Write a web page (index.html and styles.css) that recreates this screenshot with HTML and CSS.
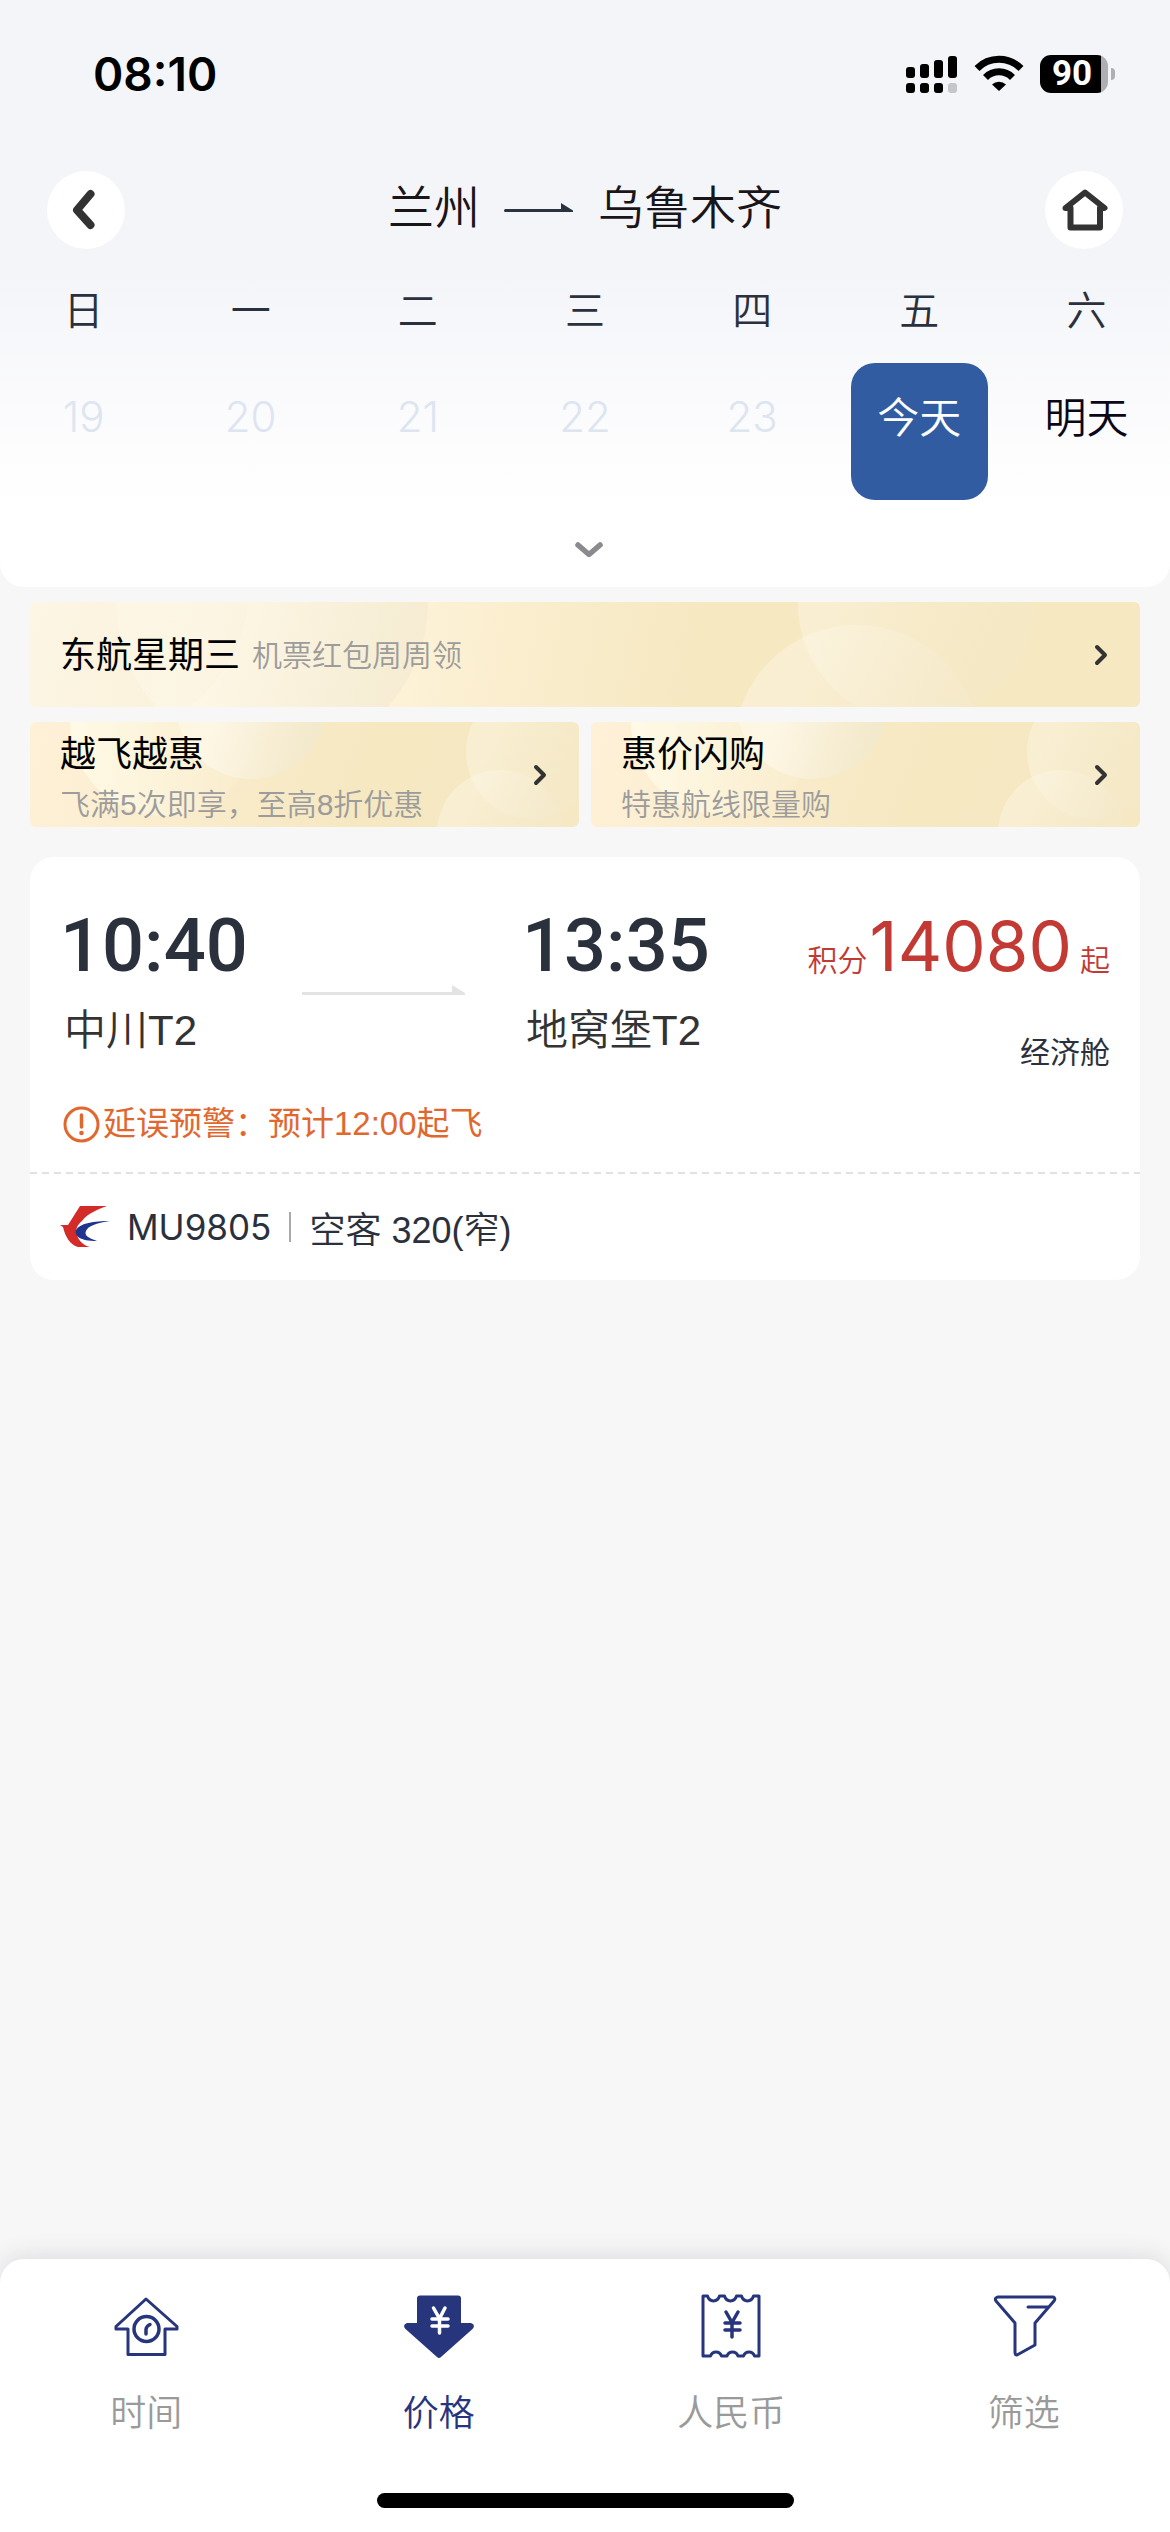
FILE: index.html
```html
<!DOCTYPE html>
<html lang="zh-CN">
<head>
<meta charset="utf-8">
<meta name="viewport" content="width=device-width">
<title>兰州 - 乌鲁木齐</title>
<link rel="stylesheet" href="styles.css">
</head>
<body>
<svg class="defs" aria-hidden="true">
  <defs>
    <linearGradient id="fade" x1="0" y1="0" x2="1" y2="0.5">
      <stop offset="0.3" stop-color="#fffaf0" stop-opacity="0.35"/>
      <stop offset="0.9" stop-color="#f3ecd6" stop-opacity="0.2"/>
    </linearGradient>
    <linearGradient id="glow" x1="0" y1="0" x2="1" y2="0.3">
      <stop offset="0" stop-color="#fffceb" stop-opacity="0.3"/>
      <stop offset="0.4" stop-color="#fffaec" stop-opacity="0.7"/>
      <stop offset="1" stop-color="#f1ead2" stop-opacity="0.6"/>
    </linearGradient>
    <linearGradient id="pale" x1="0" y1="0" x2="1" y2="0">
      <stop offset="0" stop-color="#fffbe8" stop-opacity="0.9"/>
      <stop offset="1" stop-color="#fbf4de" stop-opacity="0.1"/>
    </linearGradient>
  </defs>
  <symbol id="bubbles" viewBox="0 0 549 105">
    <circle cx="134" cy="0" r="94" fill="url(#pale)"/>
    <circle cx="221" cy="-18" r="75" fill="url(#glow)"/>
    <circle cx="503" cy="30" r="67" fill="url(#fade)"/>
    <circle cx="470" cy="111" r="63" fill="url(#fade)"/>
  </symbol>
  <symbol id="chevron" viewBox="0 0 14 22">
    <path d="M3 3l8 8-8 8" fill="none" stroke="#333" stroke-width="4" stroke-linecap="round" stroke-linejoin="round"/>
  </symbol>
</svg>

<header class="header">
  <div class="status">
    <time class="clock">08:10</time>
    <div class="indicators">
      <svg width="52" height="38" viewBox="0 0 52 38">
        <g fill="#000">
          <rect x="0" y="12" width="9" height="11" rx="3"/><rect x="14" y="9" width="9" height="14" rx="3"/>
          <rect x="28" y="5" width="9" height="18" rx="3"/><rect x="42" y="1" width="9" height="22" rx="3"/>
          <rect x="0" y="28" width="9" height="10" rx="3"/><rect x="14" y="28" width="9" height="10" rx="3"/>
          <rect x="28" y="28" width="9" height="10" rx="3"/>
        </g>
        <rect x="42" y="28" width="9" height="10" rx="3" fill="#c5c6ca"/>
      </svg>
      <svg width="50" height="38" viewBox="0 0 50 38">
        <g fill="none" stroke="#000" stroke-width="7">
          <path d="M3 13.500a31 31 0 0 1 44 0"/>
          <path d="M11.500 22.500a19 19 0 0 1 27 0"/>
        </g>
        <path d="M18 29.500a10 10 0 0 1 14 0L25 36z"/>
      </svg>
      <div class="battery"><span>90</span></div>
    </div>
  </div>
  <div class="navbar">
    <button class="round" type="button" aria-label="返回">
      <svg width="34" height="48" viewBox="0 0 34 48"><path d="M21.500 8L8 24l13.500 15" fill="none" stroke="#333" stroke-width="8" stroke-linecap="round" stroke-linejoin="round"/></svg>
    </button>
    <h1 class="route">
      <span>兰州</span>
      <svg width="70" height="10" viewBox="0 0 70 10"><path d="M1.500 6H57V0l12 7.500V9H1.500a1.500 1.500 0 0 1 0-3z" fill="#2b333f"/></svg>
      <span>乌鲁木齐</span>
    </h1>
    <button class="round" type="button" aria-label="首页">
      <svg width="48" height="44" viewBox="0 0 48 44"><path d="M5.500 20L25 4.500 44.500 20H40v19.500H10.500V20z" fill="none" stroke="#333" stroke-width="6" stroke-linejoin="round"/></svg>
    </button>
  </div>
  <div class="week names">
    <span>日</span><span>一</span><span>二</span><span>三</span><span>四</span><span>五</span><span>六</span>
  </div>
  <div class="week days">
    <button type="button" disabled>19</button><button type="button" disabled>20</button><button type="button" disabled>21</button><button type="button" disabled>22</button><button type="button" disabled>23</button><button type="button" class="today">今天</button><button type="button">明天</button>
  </div>
  <button class="expand" type="button" aria-label="展开日历">
    <svg width="30" height="18" viewBox="0 0 30 18"><path d="M4 4l11 9.500L26 4" fill="none" stroke="#8b8b8f" stroke-width="5.500" stroke-linecap="round" stroke-linejoin="round"/></svg>
  </button>
</header>

<main class="content">
  <div class="promos">
    <a class="promo wide" href="#wednesday">
      <svg class="art" viewBox="0 0 1110 105" preserveAspectRatio="xMidYMid slice" aria-hidden="true">
        <circle cx="242" cy="0" r="156" fill="url(#glow)"/>
        <circle cx="60" cy="-20" r="160" fill="url(#fade)"/>
        <circle cx="886" cy="2" r="118" fill="url(#fade)"/>
        <circle cx="827" cy="146" r="123" fill="url(#fade)"/>
      </svg>
      <span class="copy"><strong>东航星期三</strong><small>机票红包周周领</small></span>
      <svg class="go" width="14" height="22"><use href="#chevron"/></svg>
    </a>
    <a class="promo" href="#more-flights">
      <svg class="art" viewBox="0 0 549 105" preserveAspectRatio="xMidYMid slice" aria-hidden="true"><use href="#bubbles"/></svg>
      <span class="copy"><strong>越飞越惠</strong><small>飞满5次即享，至高8折优惠</small></span>
      <svg class="go" width="14" height="22"><use href="#chevron"/></svg>
    </a>
    <a class="promo" href="#flash-sale">
      <svg class="art" viewBox="0 0 549 105" preserveAspectRatio="xMidYMid slice" aria-hidden="true"><use href="#bubbles"/></svg>
      <span class="copy"><strong>惠价闪购</strong><small>特惠航线限量购</small></span>
      <svg class="go" width="14" height="22"><use href="#chevron"/></svg>
    </a>
  </div>

  <article class="flight">
    <div class="legs">
      <div class="stop"><time>10:40</time><span>中川T2</span></div>
      <svg class="line" width="163" height="12" viewBox="0 0 163 12"><path d="M1 8h149V1l13 8v2H1a1.500 1.500 0 0 1 0-3z" fill="#e3e3e3"/></svg>
      <div class="stop"><time>13:35</time><span>地窝堡T2</span></div>
      <div class="fare">
        <p class="price"><span>积分</span><b>14080</b><span class="from">起</span></p>
        <p class="cabin">经济舱</p>
      </div>
    </div>
    <p class="alert">
      <svg width="37" height="37" viewBox="0 0 37 37"><circle cx="18.500" cy="18.500" r="16.500" fill="none" stroke="#e0682f" stroke-width="3"/><path d="M18.500 9v12" stroke="#e0682f" stroke-width="3.500" stroke-linecap="round"/><circle cx="18.500" cy="27" r="2.300" fill="#e0682f"/></svg>
      <span>延误预警：预计12:00起飞</span>
    </p>
    <footer class="plane">
      <svg class="logo" width="50" height="42" viewBox="0 0 50 42"><path d="M20 0h27C36 4 27 8 22 15 17 19 15 24 17 29c2 6 6 10 13 12H18C10 39 5 30 3 21L0 19h8z" fill="#d32b27"/><path d="M50 15C34 15 20 17 16 24c-2 6 4 11 21 11-9-3-13-6-11-10C28 20 36 17 50 15z" fill="#1f3390"/></svg>
      <span class="code">MU9805</span>
      <span class="type">空客 320(窄)</span>
    </footer>
  </article>
</main>

<nav class="tabs">
  <div class="tablist">
    <button type="button">
      <svg width="70" height="66" viewBox="0 0 70 66"><g fill="none" stroke="#27357c" stroke-width="3" stroke-linejoin="round"><path d="M35 5L5 32.500V35h12v25.500h37V35h12v-2.500z"/><circle cx="35.500" cy="35" r="12.500" stroke-width="3.500"/><path d="M35 40v-4.500c0-3 2-4 4-5" stroke-linecap="round" stroke-width="3.500"/></g></svg>
      <span>时间</span>
    </button>
    <button type="button" class="active" aria-current="true">
      <svg width="70" height="66" viewBox="0 0 70 66"><path d="M16 1.500h38a3 3 0 0 1 3 3V29h10q5 2 1.500 6L37 63q-2 2-4 0L1.500 35Q-2 31 3 29h10V4.500a3 3 0 0 1 3-3z" fill="#27357c"/><path d="M29.500 14l6 10.500L41 14M35.500 24v15M28 25h16M28 32h16" fill="none" stroke="#fff" stroke-width="3.500" stroke-linecap="round"/></svg>
      <span>价格</span>
    </button>
    <button type="button">
      <svg width="70" height="66" viewBox="0 0 70 66"><g fill="none" stroke="#27357c" stroke-width="3" stroke-linejoin="round"><path d="M7 2h4.500c2 6.500 10 6.500 12 0h5c2 6.500 10 6.500 12 0h5c2 6.500 10 6.500 12 0H63v60h-4.500c-2-5.500-9-5.500-11 0h-5.500c-2-5.500-9-5.500-11 0h-5.500c-2-5.500-9-5.500-11 0H7z"/><path d="M30 18l6 10.500L42 18M36 28v15M29 29h15M29 36h15" stroke-width="3.500" stroke-linecap="round"/></g></svg>
      <span>人民币</span>
    </button>
    <button type="button">
      <svg width="70" height="66" viewBox="0 0 70 66"><path d="M9 3h55q3 1 1 4L46 29v22L28 61q-2 0-2-3V29L7 7Q5 4 9 3zM39 13h20" fill="none" stroke="#27357c" stroke-width="3" stroke-linejoin="round" stroke-linecap="round"/></svg>
      <span>筛选</span>
    </button>
  </div>
  <div class="home-bar"></div>
</nav>
</body>
</html>
```
FILE: styles.css
```css
* { box-sizing: border-box; margin: 0; padding: 0; }

body {
  min-height: 100vh;
  display: flex;
  flex-direction: column;
  background: #f7f7f7;
  color: #2b313c;
  font-family: "Liberation Sans", "Noto Sans CJK SC", sans-serif;
}

button { border: 0; background: none; font: inherit; color: inherit; }
svg { display: block; flex: none; }
.defs { position: absolute; width: 0; height: 0; }

/* Header */
.header {
  background: linear-gradient(#f4f5f9 46%, #fff 86%);
  border-radius: 0 0 24px 24px;
}
.status {
  display: flex;
  justify-content: space-between;
  align-items: center;
  height: 148px;
  padding: 0 57px 0 93px;
}
.clock { font: 600 46px/60px Inter, sans-serif; color: #000; }
.indicators { display: flex; align-items: center; gap: 16px; }
.battery {
  position: relative;
  width: 68px;
  height: 38px;
  border-radius: 11px;
  background: linear-gradient(90deg, #000 61px, #aeafb2 61px);
  margin-right: 5px;
  color: #fff;
  font: 700 35px/38px Roboto, sans-serif;
  text-align: center;
}
.battery::after {
  content: "";
  position: absolute;
  right: -7px;
  top: 13px;
  width: 4px;
  height: 12px;
  border-radius: 0 4px 4px 0;
  background: #aeafb2;
}
.battery span { padding-right: 4px; }

.navbar {
  display: flex;
  justify-content: space-between;
  align-items: center;
  padding: 23px 47px 0;
}
.round {
  display: grid;
  place-items: center;
  width: 78px;
  height: 78px;
  border-radius: 50%;
  background: #fff;
}
.route {
  display: flex;
  align-items: center;
  gap: 24px;
  padding-bottom: 4px;
  font-size: 46px;
  line-height: 60px;
  font-weight: 350;
  color: #1a1518;
}

.week { display: grid; grid-template-columns: repeat(7, 1fr); text-align: center; }
.names { padding: 32px 0 22px; font-size: 40px; line-height: 60px; font-weight: 350; }
.days button {
  justify-self: center;
  width: 137px;
  height: 137px;
  padding-bottom: 26px;
  border-radius: 24px;
  color: #0b0718;
  font-size: 42px;
  line-height: 60px;
  font-weight: 350;
}
.days button:disabled { padding-bottom: 30px; color: #dde5f1; font-family: Inter, sans-serif; font-weight: 350; }
.days .today { background: #325ca1; color: #fff; }
.expand {
  display: grid;
  place-items: center;
  width: 100%;
  height: 87px;
  padding: 12px 0 0 8px;
}

/* Promotions */
.content { flex: 1; padding: 15px 30px 30px; }
.promos { display: grid; grid-template-columns: 1fr 1fr; gap: 15px 12px; }
.promo {
  position: relative;
  overflow: hidden;
  display: flex;
  justify-content: space-between;
  align-items: center;
  height: 105px;
  padding: 0 32px 0 30px;
  border-radius: 6px;
  background: linear-gradient(110deg, #fef1d8, #f6e8c1 60%, #f5e8c3);
  color: #000;
  text-decoration: none;
}
.promo.wide { grid-column: 1 / -1; background: linear-gradient(100deg, #fdf6e3, #fdf1d6 35%, #f6e8c1 60%); }
.art { position: absolute; inset: 0; width: 100%; height: 100%; }
.copy, .go { position: relative; }
.copy { display: flex; flex-direction: column; padding-top: 10px; }
.copy strong { font-size: 36px; line-height: 50px; font-weight: 400; }
.copy small { font-size: 30px; line-height: 50px; font-weight: 350; color: #9c9c9c; }
.wide .copy { flex-direction: row; gap: 12px; padding-top: 2px; }

/* Flight card */
.flight { margin-top: 30px; padding-top: 44px; border-radius: 24px; background: #fff; }
.legs { display: grid; grid-template-columns: 242fr 220fr 250fr 338fr; padding: 0 30px; }
.stop { display: flex; flex-direction: column; }
.stop time { font: 500 74px/90px Roboto, sans-serif; }
.stop span { padding-left: 4px; font-size: 42px; line-height: 80px; font-weight: 350; color: #333; }
.line { margin-top: 83px; }
.fare { text-align: right; }
.price { display: flex; justify-content: flex-end; align-items: baseline; font-size: 30px; font-weight: 350; color: #c33a35; }
.price b { padding-left: 2px; font: 400 69px/90px Inter, sans-serif; }
.price .from { padding-left: 8px; }
.cabin { margin-top: 32px; font-size: 30px; line-height: 60px; }
.alert {
  display: flex;
  align-items: center;
  gap: 3px;
  padding: 11px 33px 18px;
  font-size: 33px;
  line-height: 60px;
  color: #e0682f;
}
.plane {
  display: flex;
  align-items: center;
  height: 108px;
  padding: 2px 30px 0;
  background: repeating-linear-gradient(90deg, #e2e2e2 0 7px, transparent 7px 12px) top / 100% 2px no-repeat;
  font-size: 36px;
  font-weight: 350;
}
.code { padding: 0 18px 0 17px; border-right: 2px solid #aaa; font: 400 35px/30px Inter, sans-serif; }
.type { padding-left: 18px; }

/* Bottom tabs */
.tabs {
  padding: 35px 0 24px;
  border-radius: 24px 24px 0 0;
  background: #fff;
  box-shadow: 0 -4px 24px rgba(40, 50, 70, 0.12);
}
.tablist { display: grid; grid-template-columns: repeat(4, 1fr); }
.tablist button {
  display: flex;
  flex-direction: column;
  align-items: center;
  gap: 24px;
  font-size: 36px;
  line-height: 60px;
  font-weight: 350;
  color: #9a9a9a;
}
.tablist .active { color: #27357c; }
.home-bar { width: 417px; height: 15px; margin: 49px auto 0; border-radius: 8px; background: #000; }
```
